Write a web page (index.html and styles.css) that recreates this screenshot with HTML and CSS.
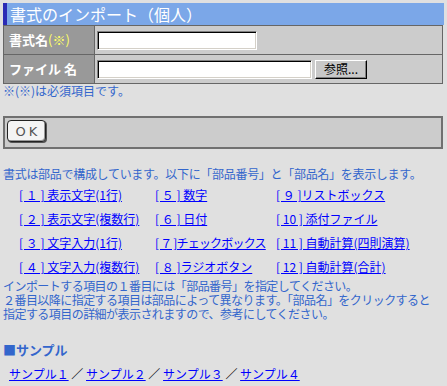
FILE: index.html
```html
<!DOCTYPE html>
<html lang="ja">
<head>
    <meta charset="UTF-8">
    <title>書式のインポート（個人）</title>
    <link rel="stylesheet" href="styles.css">
</head>
<body>
    <div class="title">書式のインポート（個人）</div>
    <table class="form-table">
        <tr>
            <th>書式名<span class="req">(※)</span></th>
            <td><input type="text" class="name-input"></td>
        </tr>
        <tr>
            <th>ファイル 名</th>
            <td><span class="file-box"></span><button type="button" class="browse">参照...</button></td>
        </tr>
    </table>
    <p class="note">※(※)は必須項目です。</p>

    <div class="ok-box">
        <button type="button" class="ok-btn">OK</button>
    </div>

    <p class="desc">書式は部品で構成しています。以下に「部品番号」と「部品名」を表示します。</p>
    <div class="parts">
        <a href="#">[ １ ] 表示文字(1行)</a>
        <a href="#">[ ５ ] 数字</a>
        <a href="#">[ ９ ]リストボックス</a>
        <a href="#">[ ２ ] 表示文字(複数行)</a>
        <a href="#">[ ６ ] 日付</a>
        <a href="#">[ 10 ] 添付ファイル</a>
        <a href="#">[ ３ ] 文字入力(1行)</a>
        <a href="#" class="tight">[ ７ ]チェックボックス</a>
        <a href="#">[ 11 ] 自動計算(四則演算)</a>
        <a href="#">[ ４ ] 文字入力(複数行)</a>
        <a href="#">[ ８ ]ラジオボタン</a>
        <a href="#">[ 12 ] 自動計算(合計)</a>
    </div>
    <p class="help">インポートする項目の１番目には「部品番号」を指定してください。<br>
    ２番目以降に指定する項目は部品によって異なります。「部品名」をクリックすると<br>
    指定する項目の詳細が表示されますので、参考にしてください。</p>

    <div class="sample-title">■サンプル</div>
    <div class="samples">
        <a href="#">サンプル１</a> ／ <a href="#">サンプル２</a> ／ <a href="#">サンプル３</a> ／ <a href="#">サンプル４</a>
    </div>
</body>
</html>
```

FILE: styles.css
```css
body {
    margin: 3px;
    background-color: #e0e0e0;
    font-family: "Noto Sans CJK JP", "DejaVu Sans", sans-serif;
    font-size: 12px;
    color: #3366cc;
}

.title {
    height: 22px;
    line-height: 22px;
    background-color: #7ba7e8;
    border-left: 4px solid #2b2bb5;
    color: #fff;
    font-size: 16px;
    padding-left: 3px;
}

.form-table {
    width: 440px;
    border-collapse: collapse;
    border: 1px solid #666;
}

.form-table th,
.form-table td {
    border: 1px solid #666;
    height: 28px;
    padding: 0;
    line-height: 16px;
    vertical-align: middle;
}

.form-table th {
    width: 85px;
    background-color: #999;
    color: #fff;
    font-size: 13px;
    text-align: left;
    padding-left: 5px;
}

.req {
    color: #ffff66;
    font-weight: normal;
}

.form-table td {
    background-color: #ccc;
    padding-left: 2px;
}

.name-input,
.file-box {
    display: inline-block;
    vertical-align: middle;
    box-sizing: border-box;
    height: 19px;
    background: #fff;
    border: 1px solid;
    border-color: #808080 #fff #fff #808080;
    box-shadow: inset 1px 1px 0 #000, inset -1px -1px 0 #d4d0c8;
    padding: 0;
    margin: 0;
}

.name-input {
    width: 160px;
}

.file-box {
    width: 215px;
}

.browse {
    vertical-align: middle;
    box-sizing: border-box;
    width: 52px;
    height: 19px;
    margin: 0 0 0 3px;
    padding: 0;
    background-color: #c8c8c8;
    border: 1px solid;
    border-color: #fff #000 #000 #fff;
    box-shadow: inset -1px -1px 0 #808080;
    font-family: inherit;
    font-size: 12px;
    line-height: 16px;
    color: #000;
}

.note {
    margin: 0;
    line-height: 14px;
}

.ok-box {
    margin-top: 18px;
    width: 440px;
    height: 33px;
    background-color: #ccc;
    border: 2px solid #707070;
    padding: 2px 0 0 2px;
    box-sizing: border-box;
}

.ok-btn {
    width: 39px;
    height: 22px;
    padding: 0;
    background-color: #f4f4f4;
    border: 1px solid #222;
    border-radius: 4px;
    box-shadow: inset -1px -1px 0 #999, 1px 1px 0 #555;
    font-family: "DejaVu Sans", sans-serif;
    font-size: 13px;
    letter-spacing: 3px;
    text-indent: 3px;
    color: #555;
}

.desc {
    margin: 18px 0 0;
    line-height: 14px;
    letter-spacing: -0.3px;
}

.parts {
    margin-top: 7px;
    padding-left: 16px;
    display: grid;
    grid-template-columns: 136px 121px auto;
    row-gap: 10px;
    line-height: 14px;
    white-space: nowrap;
}

.parts a,
.samples a {
    color: #0000ff;
    justify-self: start;
}

.parts .tight {
    letter-spacing: -0.8px;
}

.help {
    margin: 5px 0 0;
    line-height: 14px;
    letter-spacing: -0.55px;
    white-space: nowrap;
}

.sample-title {
    margin-top: 21px;
    line-height: 16px;
    font-size: 13px;
    font-weight: bold;
}

.samples {
    margin-top: 8px;
    padding-left: 6px;
    line-height: 16px;
    color: #000;
}
```
